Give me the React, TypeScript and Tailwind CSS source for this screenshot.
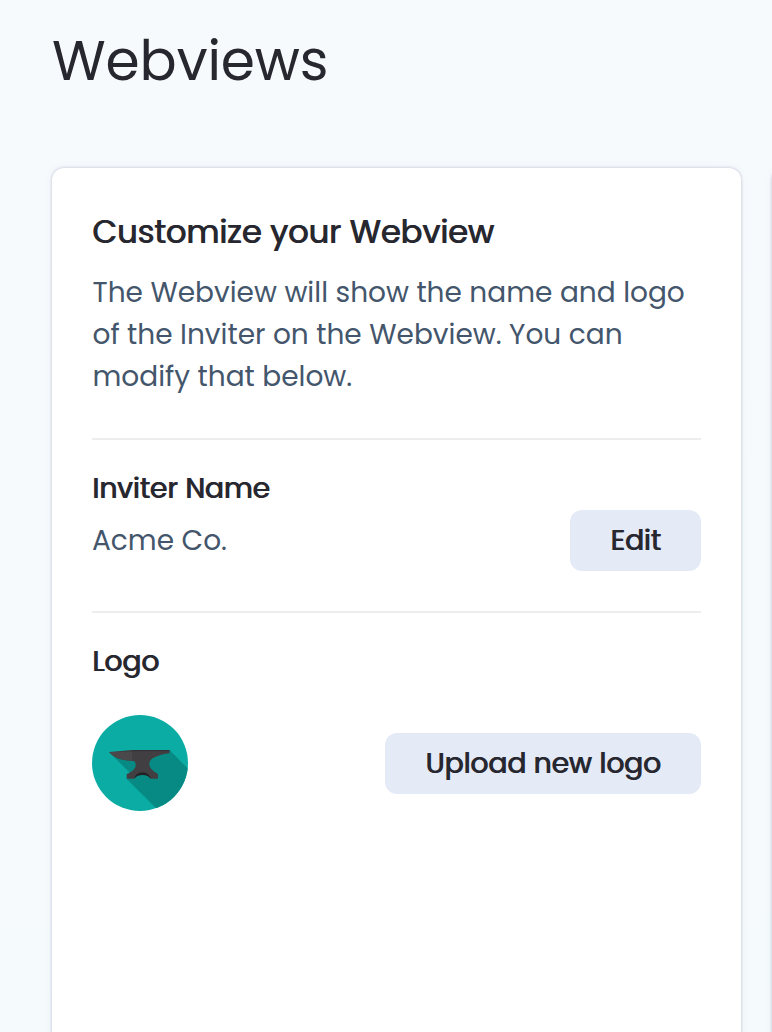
function AnvilLogo() {
  return (
    <svg viewBox="0 0 96 96" className="block size-24" role="img" aria-label="Acme Co.">
      <defs>
        <clipPath id="disc">
          <circle cx="48" cy="48" r="48" />
        </clipPath>
      </defs>
      <g clipPath="url(#disc)">
        <rect width="96" height="96" fill="#0aaca4" />
        <path d="M77.5 35 L120 78 V113 H84 L34.7 64 L44 50 Z" fill="#078a83" />
        <path d="M17 37 L44 64 V40 Z" fill="#078a83" />
        <path
          d="M40 35 H77.500 V38.200 C68 39.500 57.300 42.500 57.300 48.500 C57.300 53 60.500 56 66 59 V63.800 H58.700 C57 60.500 54 59.300 50.500 59.300 C47 59.300 44 60.500 42.200 63.800 H34.700 V59 C40 57 43.700 54 43.700 50 C43.700 47 42.500 45.700 39.500 45.700 C29 45.700 21 42 17.200 37 Z"
          fill="#413f42"
        />
        <path d="M17.200 37 H40 V45.700 C29 45.700 21 42 17.200 37 Z" fill="#4a484b" />
        <path d="M40 35 H77.500 V36.300 H40 Z" fill="#343235" />
        <path d="M42.200 63.800 C43.500 59 47 57.500 50.500 57.500 C54 57.500 57.500 59 58.700 63.800 C56.500 61 54 60 50.500 60 C47 60 44.500 61 42.200 63.800 Z" fill="#222023" />
      </g>
    </svg>
  );
}

const cardShadow = "shadow-[0_0_3px_rgba(60,60,110,0.32),0_0_12px_rgba(60,80,120,0.04)]";
const emphasis = "font-normal [text-shadow:1px_0_0_currentColor]";

export default function App() {
  return (
    <div className="flex h-[1032px] w-[772px] flex-col overflow-hidden bg-linear-to-b from-[#f7fafd] to-[#f5fafc] pl-[52px] font-['Poppins','Inter',sans-serif] text-[#27272f]">
      <header className="h-[168px] shrink-0 pt-[19px]">
        <h1 className="whitespace-nowrap text-[55px] leading-[84px] font-normal tracking-[-0.1px]">Webviews</h1>
      </header>
      <main className="flex min-h-0 flex-1 gap-[31px]">
        <section className={`-mb-5 w-[689px] shrink-0 rounded-[12px] bg-white px-10 pt-10 ${cardShadow}`}>
          <h2 className={`whitespace-nowrap text-[32px] leading-[48px] ${emphasis}`}>
            Customize your Webview
          </h2>
          <p className="mt-4 pl-[0.5px] text-[28px] leading-[42px] text-[#44566c]">
            The Webview will show the name and logo
            <br />
            of the Inviter on the Webview. You can
            <br />
            modify that below.
          </p>
          <hr className="mt-10 border-t-2 border-[#ededee]" />
          <h3 className={`mt-[28px] text-[28px] leading-[42px] ${emphasis}`}>Inviter Name</h3>
          <div className="flex h-[61px] items-center justify-between">
            <span className="text-[28px] leading-[42px] text-[#44566c]">Acme Co.</span>
            <button className={`h-[61px] w-[131px] rounded-[12px] bg-[#e4ebf7] text-[28px] leading-[42px] ${emphasis}`}>
              Edit
            </button>
          </div>
          <hr className="mt-10 border-t-2 border-[#ededee]" />
          <h3 className={`mt-[28px] text-[28px] leading-[42px] ${emphasis}`}>Logo</h3>
          <div className="mt-[32px] flex h-24 items-center justify-between">
            <AnvilLogo />
            <button className={`h-[61px] w-[316px] rounded-[12px] bg-[#e4ebf7] pt-px text-[28px] leading-[42px] whitespace-nowrap ${emphasis}`}>
              Upload new logo
            </button>
          </div>
        </section>
        <section className={`-mb-5 w-[689px] shrink-0 rounded-[12px] bg-white ${cardShadow}`} />
      </main>
    </div>
  );
}
